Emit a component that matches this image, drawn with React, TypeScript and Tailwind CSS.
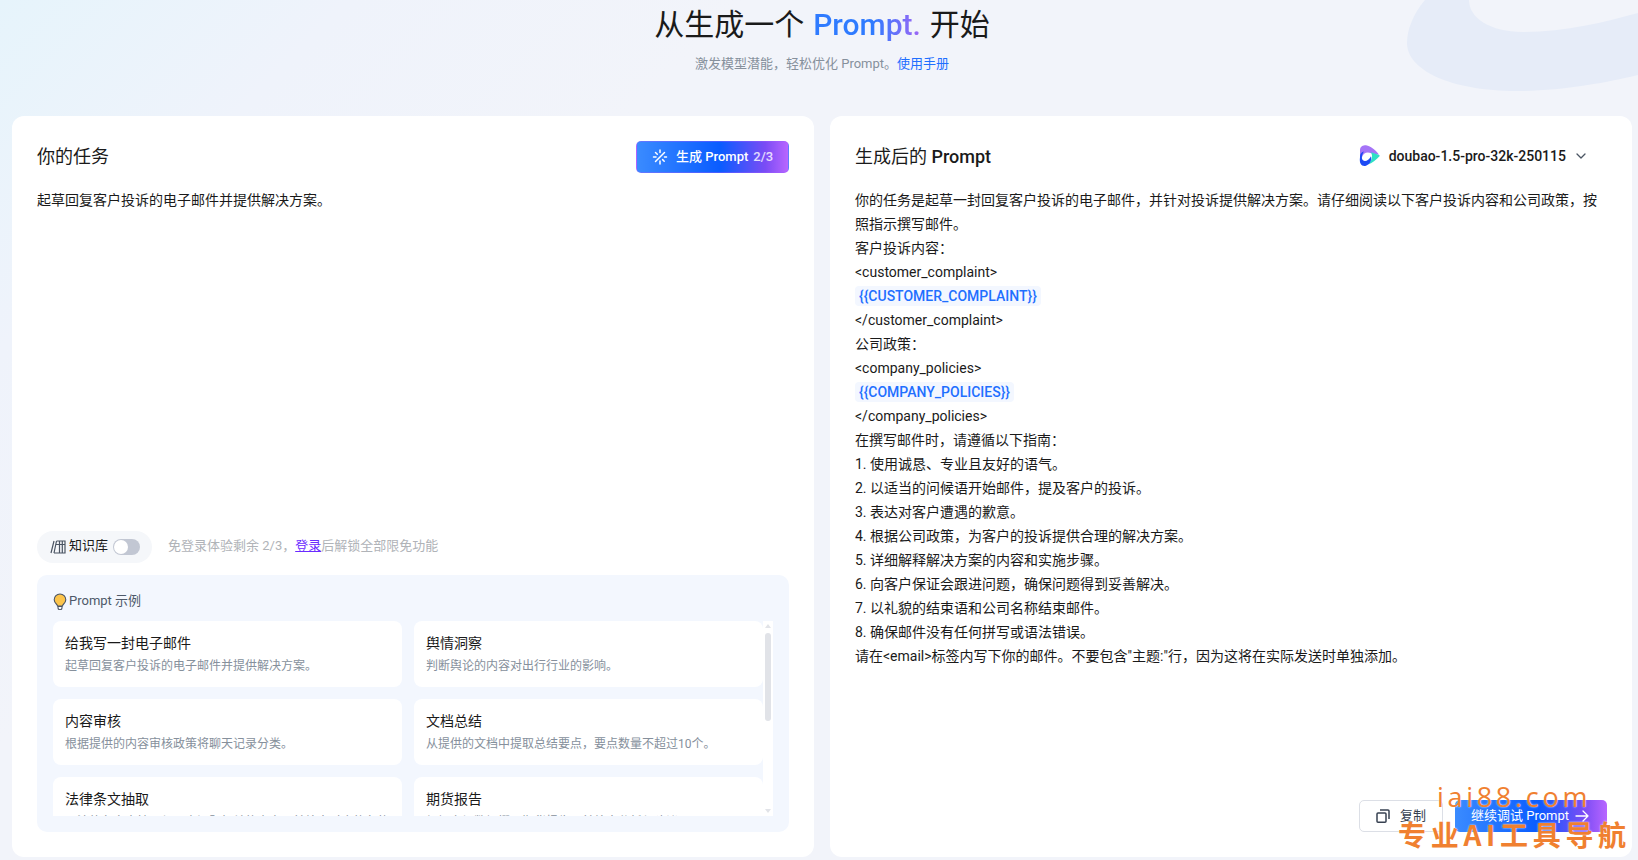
const font = "font-['Roboto','Noto_Sans_CJK_SC',sans-serif]";

const examples = [
  ["给我写一封电子邮件", "起草回复客户投诉的电子邮件并提供解决方案。"],
  ["舆情洞察", "判断舆论的内容对出行行业的影响。"],
  ["内容审核", "根据提供的内容审核政策将聊天记录分类。"],
  ["文档总结", "从提供的文档中提取总结要点，要点数量不超过10个。"],
  ["法律条文抽取", "从法律条文中抽取与用户问题相关的内容，并给出对应的条款依据。"],
  ["期货报告", "根据市场数据撰写期货报告，并给出分析与建议。"],
];

const lines: (string | { chip: string })[] = [
  "客户投诉内容：",
  "<customer_complaint>",
  { chip: "{{CUSTOMER_COMPLAINT}}" },
  "</customer_complaint>",
  "公司政策：",
  "<company_policies>",
  { chip: "{{COMPANY_POLICIES}}" },
  "</company_policies>",
  "在撰写邮件时，请遵循以下指南：",
  "1. 使用诚恳、专业且友好的语气。",
  "2. 以适当的问候语开始邮件，提及客户的投诉。",
  "3. 表达对客户遭遇的歉意。",
  "4. 根据公司政策，为客户的投诉提供合理的解决方案。",
  "5. 详细解释解决方案的内容和实施步骤。",
  "6. 向客户保证会跟进问题，确保问题得到妥善解决。",
  "7. 以礼貌的结束语和公司名称结束邮件。",
  "8. 确保邮件没有任何拼写或语法错误。",
  "请在<email>标签内写下你的邮件。不要包含\"主题:\"行，因为这将在实际发送时单独添加。",
];

function Sparkle() {
  return (
    <svg width="16" height="16" viewBox="0 0 16 16" fill="none" stroke="white" strokeWidth="1.5" strokeLinecap="round">
      <path d="M8 1v2.500M8 12v3M1.500 8H4M12.500 8h2M3.500 3.500l1.800 1.800M12.500 3.500 3.500 12.500M12.200 12.200l-1.600-1.600" />
    </svg>
  );
}

function DoubaoLogo() {
  return (
    <svg width="21" height="22" viewBox="0 0 21 21.500">
      <path d="M1 5C1 1 4 0 7 0c5 1 10 5 13 9.500L12 8C8 6 4 8 3 12l-2 2z" fill="#a574f7" />
      <path d="M12 7c3 1 6 1.500 9 3.500C17 15 13 18 9 19c4-4 5-8 3-12z" fill="#2fe0c5" />
      <path d="M1 12c0-4 2-5 4-6C3 9 2 13 4 15c2 2 6 0 8-4 1 4-1 8-5 9.500C3 21.500 0 19 1 12z" fill="#1d4af5" />
    </svg>
  );
}

function Bulb() {
  return (
    <svg width="14" height="17" viewBox="0 0 14 17">
      <path d="M7 1a5.800 5.800 0 0 0-5.800 5.800c0 2.200 1.300 3.600 2.500 4.700.5.500.8 1 .8 1.500h5c0-.5.300-1 .8-1.500 1.200-1.100 2.500-2.500 2.500-4.700A5.800 5.800 0 0 0 7 1z" fill="#fcc44b" stroke="#4b5563" strokeWidth="1.100" />
      <path d="M5 13.500h4v1.200a2 2 0 0 1-4 0z" fill="#fff" stroke="#4b5563" strokeWidth="1.100" />
    </svg>
  );
}

function Books() {
  return (
    <svg width="16" height="14" viewBox="0 0 16 14" fill="none" stroke="#4b5563" strokeWidth="1.200">
      <path d="M1 13 4 1M4 13 6.500 1" />
      <path d="M6.500 1h8.500v12H4M9.500 1v12M12.300 1v12M6 4.500h9" />
    </svg>
  );
}

function Copy() {
  return (
    <svg width="14" height="14" viewBox="0 0 14 14" fill="none" stroke="#374151" strokeWidth="1.500">
      <rect x="1" y="4" width="9" height="9.200" rx="1" />
      <path d="M4 1h8a1 1 0 0 1 1 1v8" />
    </svg>
  );
}

function Arrow() {
  return (
    <svg width="14" height="12" viewBox="0 0 14 12" fill="none" stroke="white" strokeWidth="1.300" strokeLinecap="round" strokeLinejoin="round">
      <path d="M1 6h12M8 1l5 5-5 5" />
    </svg>
  );
}

function Chevron() {
  return (
    <svg width="12" height="12" viewBox="0 0 12 12" fill="none" stroke="#4b5563" strokeWidth="1.300" strokeLinecap="round" strokeLinejoin="round">
      <path d="M2 4l4 4 4-4" />
    </svg>
  );
}

function Gradient({ className, children }: { className: string; children: React.ReactNode }) {
  return (
    <button className={`flex items-center rounded-[5px] bg-[linear-gradient(90deg,#3a8bff_0%,#0a5cff_55%,#7b4cf5_85%,#b866ff_100%)] text-white ${className}`}>
      {children}
    </button>
  );
}

export default function App() {
  return (
    <div className={`${font} relative h-[860px] w-[1638px] overflow-hidden bg-[linear-gradient(135deg,#e6f4fb_0%,#eff3fb_14%,#f2f4fa_30%,#f2f4fa_100%)] text-[14px] text-[#1a1a1a]`}>
      <svg className="absolute left-[1400px] top-0" width="238" height="110" viewBox="0 0 238 110">
        <path d="M25 0C13 14 7 30 7 43c0 27 43 48 110 48 43 0 88-8 121-16V0z" fill="#e6ecf8" />
        <path d="M69 0c0 18 21 32 54 32 42 0 82-10 115-19V0z" fill="#f2f4fa" />
      </svg>

      <div className="relative flex h-[116px] flex-col items-center pl-[6px]">
        <h1 className="mt-[5px] flex h-[40px] items-center gap-[9px] text-[30px] font-normal leading-[40px] text-[#1a1a1a]">
          <span>从生成一个</span>
          <span className="bg-[linear-gradient(90deg,#2f7bff_0%,#2f7bff_55%,#a066f5_100%)] bg-clip-text font-medium text-transparent">Prompt.</span>
          <span>开始</span>
        </h1>
        <p className="mt-[9px] text-[13px] leading-[20px] text-[#86909c]">
          激发模型潜能，轻松优化 Prompt。<span className="text-[#1f6fff]">使用手册</span>
        </p>
      </div>

      <div className="relative flex gap-4 pl-3">
        <section className="flex h-[741px] w-[802px] flex-col rounded-[12px] bg-white px-[25px] pb-[25px]">
          <div className="mt-[25px] flex h-8 items-center justify-between">
            <h2 className="mb-[2px] text-[18px] font-normal">你的任务</h2>
            <Gradient className="h-8 w-[153px] gap-[8px] border border-[#a060ff]/40 pl-[15px] text-[13px] font-medium">
              <Sparkle />
              <span>生成 Prompt</span>
              <span className="-ml-[3px] text-white/80">2/3</span>
            </Gradient>
          </div>
          <p className="mt-[15px] leading-6">起草回复客户投诉的电子邮件并提供解决方案。</p>
          <div className="flex-1" />
          <div className="flex items-center">
            <div className="flex h-8 w-[115px] items-center rounded-full bg-[#f5f7fa] pl-[13px]">
              <Books />
              <span className="mb-[2px] ml-[3px] text-[13px]">知识库</span>
              <span className="ml-[5px] flex h-4 w-[27px] items-center rounded-full bg-[#c2c7d3] pl-[1px]">
                <span className="h-[14px] w-[14px] rounded-full bg-white" />
              </span>
            </div>
            <p className="mb-[2px] ml-4 text-[13px] text-[#b0b3b8]">
              免登录体验剩余 2/3，<span className="text-[#6a2bff] underline">登录</span>后解锁全部限免功能
            </p>
          </div>
          <div className="mt-3 h-[257px] rounded-[10px] bg-[#f3f7fe] px-4 pb-4">
            <div className="flex h-[46px] items-center gap-[2px] pt-[6px] text-[13px] text-[#4e5969]">
              <Bulb />
              <span>Prompt 示例</span>
            </div>
            <div className="flex h-[195px]">
              <div className="grid w-[710px] grid-cols-2 content-start gap-x-3 gap-y-3 overflow-hidden">
                {examples.map(([t, d]) => (
                  <div key={t} className="h-[66px] shrink-0 rounded-[8px] bg-white px-3 pt-[12px]">
                    <div className="text-[14px] leading-[20px] text-[#1a1a1a]">{t}</div>
                    <div className="mt-[3px] text-[12px] leading-[20px] text-[#86909c]">{d}</div>
                  </div>
                ))}
              </div>
              <div className="relative w-[10px] bg-white">
                <div className="absolute left-[2px] top-[12px] h-[88px] w-[6px] rounded-full bg-[#e1e3e8]" />
                <div className="absolute left-[2px] top-[3px] h-0 w-0 border-x-[3px] border-b-[4px] border-x-transparent border-b-[#e1e3e8]" />
                <div className="absolute bottom-[3px] left-[2px] h-0 w-0 border-x-[3px] border-t-[4px] border-x-transparent border-t-[#e1e3e8]" />
              </div>
            </div>
          </div>
        </section>

        <section className="relative flex h-[741px] w-[802px] flex-col rounded-[12px] bg-white px-[25px] pb-[25px]">
          <div className="mt-[25px] flex h-8 items-center justify-between">
            <h2 className="mb-[2px] text-[18px] font-normal">生成后的 <span className="font-medium">Prompt</span></h2>
            <div className="mb-[2px] mr-[20px] flex items-center">
              <DoubaoLogo />
              <span className="ml-[9px] text-[14px] font-medium text-[#1a1a1a]">doubao-1.5-pro-32k-250115</span>
              <span className="ml-[9px]"><Chevron /></span>
            </div>
          </div>
          <div className="mt-[15px] leading-6">
            <p>你的任务是起草一封回复客户投诉的电子邮件，并针对投诉提供解决方案。请仔细阅读以下客户投诉内容和公司政策，按照指示撰写邮件。</p>
            {lines.map((l, i) =>
              typeof l === "string" ? (
                <p key={i}>{l}</p>
              ) : (
                <p key={i}><span className="rounded-[4px] bg-[#f3f7ff] px-1 py-[2px] font-medium text-[#1f6fff]">{l.chip}</span></p>
              ),
            )}
          </div>
          <div className="flex-1" />
          <div className="flex justify-end gap-3">
            <button className="flex h-8 w-[84px] items-center justify-center gap-[10px] rounded-[5px] border border-[#dcdfe6] bg-white text-[13px] text-[#374151]">
              <Copy />
              <span>复制</span>
            </button>
            <Gradient className="h-8 w-[152px] gap-[6px] pl-[16px] text-[13px]">
              <span>继续调试 Prompt</span>
              <Arrow />
            </Gradient>
          </div>
        </section>
      </div>

      <div className="absolute left-[1437px] top-[782px] text-[27px] leading-[30px] tracking-[3.7px] text-[#f08030] [font-family:'Open_Sans',sans-serif] [text-shadow:0_0_2px_white]">iai88.com</div>
      <div className="absolute left-[1398px] top-[816px] text-[28px] font-bold leading-[36px] tracking-[4.7px] text-[#f08030] [font-family:'Noto_Sans_CJK_SC',sans-serif] [text-shadow:0_0_2px_white]">专业AI工具导航</div>
    </div>
  );
}
